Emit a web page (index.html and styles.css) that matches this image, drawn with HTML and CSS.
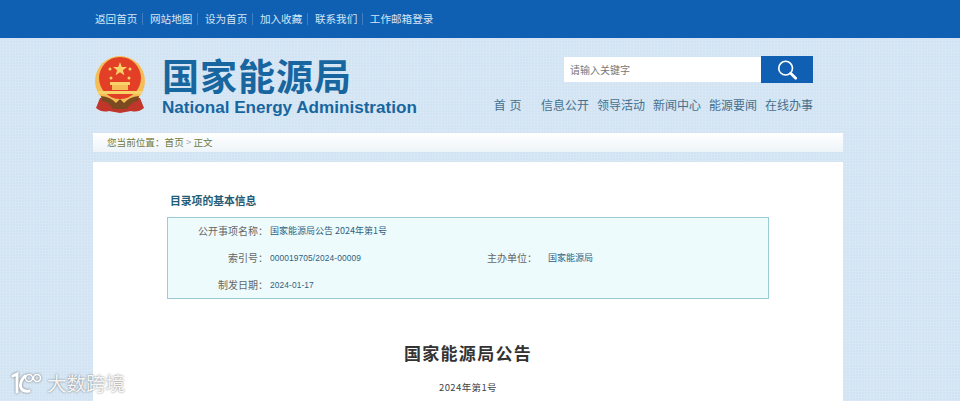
FILE: index.html
```html
<!DOCTYPE html>
<html lang="zh-CN">
<head>
    <meta charset="UTF-8">
    <title>国家能源局公告</title>
    <link rel="stylesheet" href="styles.css">
</head>
<body>
    <!-- Top bar -->
    <div class="topbar">
        <div class="wrap topbar-links">
            <a>返回首页</a><a>网站地图</a><a>设为首页</a><a>加入收藏</a><a>联系我们</a><a>工作邮箱登录</a>
        </div>
    </div>

    <!-- Logo, search and main nav -->
    <div class="wrap header">
        <svg class="emblem" viewBox="0 0 54 58" width="54" height="58">
            <path d="M7 42 L3 52 Q9 57 16 55 L27 57 L38 55 Q45 57 51 52 L47 42 Z" fill="#c0362a"/>
            <circle cx="27" cy="25" r="25" fill="#f4bd55"/>
            <circle cx="27" cy="22" r="21" fill="#e23f26"/>
            <polygon points="27,6 28.8,11 34,11.1 29.9,14.3 31.4,19.3 27,16.3 22.6,19.3 24.1,14.3 20,11.1 25.2,11" fill="#f6d268"/>
            <circle cx="17" cy="13" r="1.5" fill="#f6d268"/>
            <circle cx="37" cy="13" r="1.5" fill="#f6d268"/>
            <circle cx="18" cy="22" r="1.5" fill="#f6d268"/>
            <circle cx="36" cy="22" r="1.5" fill="#f6d268"/>
            <rect x="17" y="26" width="20" height="3" fill="#f6d268"/>
            <rect x="19" y="29" width="16" height="5" fill="#f4bd55"/>
            <path d="M5 35 H49 V38 H5 Z" fill="#f6d268"/>
            <path d="M8 40 Q18 41 23 47 L27 43 L31 47 Q36 41 46 40 L45 45 Q38 46 34 53 H20 Q16 46 9 45 Z" fill="#7c4a20"/>
        </svg>
        <div class="brand">
            <div class="brand-cn">国家能源局</div>
            <div class="brand-en">National Energy Administration</div>
        </div>
        <div class="header-right">
            <form class="search">
                <div class="search-input">请输入关键字</div>
                <div class="search-btn">
                    <svg viewBox="0 0 24 24" width="22" height="22">
                        <circle cx="10.5" cy="10" r="7.5" fill="none" stroke="#fff" stroke-width="1.8"/>
                        <path d="M16 15.5 L21.5 21" stroke="#fff" stroke-width="3" stroke-linecap="round"/>
                    </svg>
                </div>
            </form>
            <div class="nav">
                <a class="nav-home">首 页</a><a>信息公开</a><a>领导活动</a><a>新闻中心</a><a>能源要闻</a><a>在线办事</a>
            </div>
        </div>
    </div>

    <!-- Breadcrumb -->
    <div class="wrap crumb">您当前位置：首页 <span class="crumb-sep">&gt;</span> 正文</div>

    <!-- Article -->
    <div class="wrap article">
        <h3 class="info-title">目录项的基本信息</h3>
        <div class="info-box">
            <div class="info-row">
                <span class="info-label">公开事项名称：</span>
                <span class="info-value">国家能源局公告 2024年第1号</span>
            </div>
            <div class="info-row">
                <span class="info-label">索引号：</span>
                <span class="info-value info-code info-index">000019705/2024-00009</span>
                <span class="info-label info-label-2">主办单位：</span>
                <span class="info-value">国家能源局</span>
            </div>
            <div class="info-row">
                <span class="info-label">制发日期：</span>
                <span class="info-value info-code">2024-01-17</span>
            </div>
        </div>
        <h1 class="doc-title">国家能源局公告</h1>
        <p class="doc-no">2024年第1号</p>
    </div>

    <!-- Watermark -->
    <div class="watermark">
        <svg viewBox="0 0 34 22" width="34" height="22">
            <path d="M3 4 L7 2 V20 M15 4 Q9 10 11 16 Q13 20 19 19" fill="none" stroke="#fff" stroke-width="3" stroke-linecap="round"/>
            <circle cx="19" cy="6" r="3.5" fill="none" stroke="#fff" stroke-width="1.6"/>
            <circle cx="27" cy="6" r="3.5" fill="none" stroke="#fff" stroke-width="1.6"/>
        </svg>
        <span>大数跨境</span>
    </div>
</body>
</html>
```

FILE: styles.css
```css
html, body {
    height: 100%;
}
body {
    margin: 0;
    overflow: hidden;
    position: relative;
    font-family: "Noto Sans CJK SC", "Liberation Sans", sans-serif;
    color: #333;
    background-color: #d2e4f3;
    background-image:
        repeating-linear-gradient(0deg, rgba(255, 255, 255, 0.1) 0, rgba(255, 255, 255, 0.1) 1px, transparent 1px, transparent 3px),
        repeating-linear-gradient(90deg, rgba(255, 255, 255, 0.1) 0, rgba(255, 255, 255, 0.1) 1px, transparent 1px, transparent 3px);
}
.wrap {
    width: 750px;
    margin-left: 93px;
    box-sizing: border-box;
}
.topbar {
    height: 38px;
    background-color: #0f60b3;
}
.topbar-links {
    display: flex;
    align-items: center;
    height: 37px;
    padding-left: 2px;
    font-size: 10.6px;
    color: #d5e5f5;
}
.topbar-links a {
    padding-right: 5px;
    margin-right: 6.6px;
    border-right: 1px solid #3f7fc2;
    line-height: 12px;
}
.topbar-links a:last-child {
    border-right: none;
}
.header {
    display: flex;
    height: 95px;
    padding-top: 18px;
}
.emblem {
    flex: none;
}
.brand {
    margin-left: 15px;
    color: #17669f;
}
.brand-cn {
    margin-top: -2px;
    font-size: 37px;
    font-weight: 700;
    line-height: 42px;
    letter-spacing: 1px;
}
.brand-en {
    margin-top: 2px;
    font-family: "Liberation Sans", sans-serif;
    font-size: 17.1px;
    font-weight: 700;
    line-height: 20px;
}
.header-right {
    margin-left: auto;
    width: 249px;
    margin-right: 30px;
}
.search {
    display: flex;
    height: 27px;
    margin: 0;
}
.search-input {
    flex: 1;
    height: 25px;
    margin-top: 1px;
    padding-left: 6px;
    background-color: #fff;
    font-size: 10px;
    line-height: 25px;
    color: #777;
}
.search-btn {
    display: flex;
    align-items: center;
    justify-content: center;
    width: 52px;
    background-color: #0f60b3;
}
.nav {
    display: flex;
    justify-content: flex-end;
    gap: 8px;
    width: 320px;
    margin-left: -71px;
    margin-top: 13px;
    font-size: 12px;
    line-height: 18px;
    color: #46708f;
    white-space: nowrap;
}
.nav-home {
    margin-right: 11px;
    letter-spacing: 0.5px;
}
.crumb {
    height: 19px;
    padding-left: 14px;
    background: linear-gradient(#fff, #eef4f9);
    font-size: 9.6px;
    line-height: 19px;
    color: #6f7a3c;
}
.crumb-sep {
    color: #aaa;
}
.article {
    height: 240px;
    margin-top: 10px;
    padding: 30px 74px 0;
    background-color: #fff;
}
.info-title {
    margin: 0 0 8px 3px;
    font-size: 10.8px;
    font-weight: 700;
    line-height: 17px;
    color: #1f5d78;
}
.info-box {
    height: 82px;
    box-sizing: border-box;
    background-color: #edfbfd;
    border: 1px solid #9ccbd8;
}
.info-row {
    display: flex;
    align-items: center;
    box-sizing: border-box;
    height: 27px;
    padding-bottom: 2px;
}
.info-label {
    width: 100px;
    text-align: right;
    font-size: 10px;
    color: #666;
    white-space: nowrap;
}
.info-value {
    margin-left: 2px;
    font-size: 9px;
    color: #2f5f7d;
}
.info-code {
    font-family: "Liberation Sans", sans-serif;
    font-size: 8.4px;
    letter-spacing: 0.1px;
}
.info-index {
    width: 217px;
}
.info-label-2 {
    width: 59px;
    text-align: left;
}
.doc-title {
    margin: 44px 0 0;
    text-align: center;
    font-size: 17px;
    font-weight: 700;
    line-height: 20px;
    letter-spacing: 1.3px;
    color: #333;
}
.doc-no {
    margin: 17px 0 0;
    text-align: center;
    font-size: 9.5px;
    line-height: 14px;
    letter-spacing: 0.4px;
    color: #444;
}
.watermark {
    position: absolute;
    left: 10px;
    top: 372px;
    display: flex;
    align-items: center;
    gap: 3px;
    font-size: 19.5px;
    line-height: 22px;
    color: rgba(255, 255, 255, 0.92);
    text-shadow: 0 0 2px rgba(80, 80, 80, 0.8);
}
.watermark svg {
    filter: drop-shadow(0 0 1px rgba(80, 80, 80, 0.8));
}
```
